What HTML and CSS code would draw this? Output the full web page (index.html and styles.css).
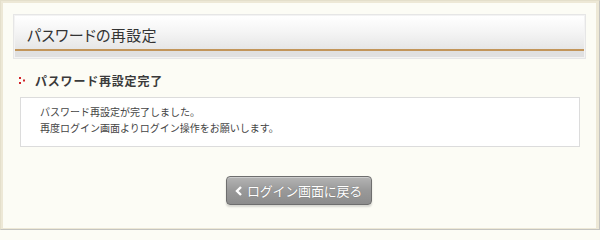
FILE: index.html
```html
<!DOCTYPE html>
<html lang="ja">
<head>
<meta charset="utf-8">
<title>パスワードの再設定</title>
<link rel="stylesheet" href="styles.css">
</head>
<body>
<div class="page">
  <div class="frame">
    <div class="header">
      <div class="header-inner">
        <h1 class="title">パスワードの再設定</h1>
      </div>
      <div class="header-band"></div>
    </div>
    <h2 class="section-title">
      <svg class="bullet" width="8" height="9" viewBox="0 0 8 9">
        <rect x="0" y="1" width="2" height="2" fill="#d2232a"/>
        <rect x="0" y="6" width="2" height="2" fill="#d2232a"/>
        <rect x="4" y="3.5" width="2" height="2" fill="#d2232a"/>
      </svg>
      <span>パスワード再設定完了</span>
    </h2>
    <div class="message">
      <p>パスワード再設定が完了しました。</p>
      <p>再度ログイン画面よりログイン操作をお願いします。</p>
    </div>
    <div class="actions">
      <a class="btn" href="#">
        <svg class="chev" width="8" height="10" viewBox="0 0 8 10">
          <path d="M6 1 L2 5 L6 9" fill="none" stroke="#fff" stroke-width="2.4"/>
        </svg>
        <span>ログイン画面に戻る</span>
      </a>
    </div>
  </div>
</div>
</body>
</html>
```
FILE: styles.css
```css
html, body {
  margin: 0;
  padding: 0;
}
body {
  font-family: "Noto Sans CJK JP", "Noto Sans", sans-serif;
  color: #333;
  background: #fcfcf5;
}
.page {
  width: 600px;
  height: 230px;
  box-sizing: border-box;
  border-top: 1px solid #e4dfcb;
  border-left: 1px solid #e4dfcb;
  border-right: 1px solid #c4c4c0;
  border-bottom: 1px solid #c4c4c0;
  background: #fcfcf5;
}
.frame {
  box-sizing: border-box;
  height: 100%;
  border: 2px solid #ede8d6;
  border-right-width: 3px;
  border-bottom-width: 1px;
  padding: 11px 10px 0 10px;
}
.header {
  border: 1px solid #e6e6e6;
  padding: 1px;
  background: #f3f3f3;
}
.header-inner {
  height: 33px;
  background: linear-gradient(#ffffff, #f4f4f4 50%, #e6e6e6);
  border-bottom: 2px solid #c2955a;
  display: flex;
  align-items: center;
  padding-left: 12px;
}
.title {
  margin: 0;
  font-size: 15px;
  font-weight: normal;
  color: #333;
  font-feature-settings: "palt";
  letter-spacing: 0.3px;
  padding-top: 4px;
}
.header-band {
  height: 6px;
  background: #e0e0e0;
}
.section-title {
  margin: 13px 0 0 6px;
  display: flex;
  align-items: center;
  gap: 8px;
  font-size: 12px;
  font-weight: bold;
  color: #3a3a3a;
  letter-spacing: 0.8px;
  height: 16px;
}
.bullet {
  display: block;
}
.message {
  margin: 9px 6px 0 7px;
  height: 50px;
  box-sizing: border-box;
  background: #fff;
  border: 1px solid #dcdcdc;
  padding: 6px 0 0 19px;
  font-size: 10px;
  line-height: 16px;
  color: #444;
}
.message p {
  margin: 0;
}
.actions {
  display: flex;
  justify-content: center;
  margin-top: 29px;
  padding-right: 2px;
}
.btn {
  display: flex;
  align-items: center;
  justify-content: center;
  gap: 4px;
  width: 146px;
  height: 29px;
  box-sizing: border-box;
  border: 1px solid #6e6e6e;
  border-radius: 4px;
  background: linear-gradient(#b4b4b4, #999 50%, #8c8c8c);
  box-shadow: inset 0 1px 0 rgba(255,255,255,0.35), 0 2px 2px rgba(0,0,0,0.15);
  color: #fff;
  text-decoration: none;
  font-size: 13px;
  text-shadow: 0 0 1px rgba(0,0,0,0.35);
  letter-spacing: -0.2px;
}
.chev {
  display: block;
}
```
